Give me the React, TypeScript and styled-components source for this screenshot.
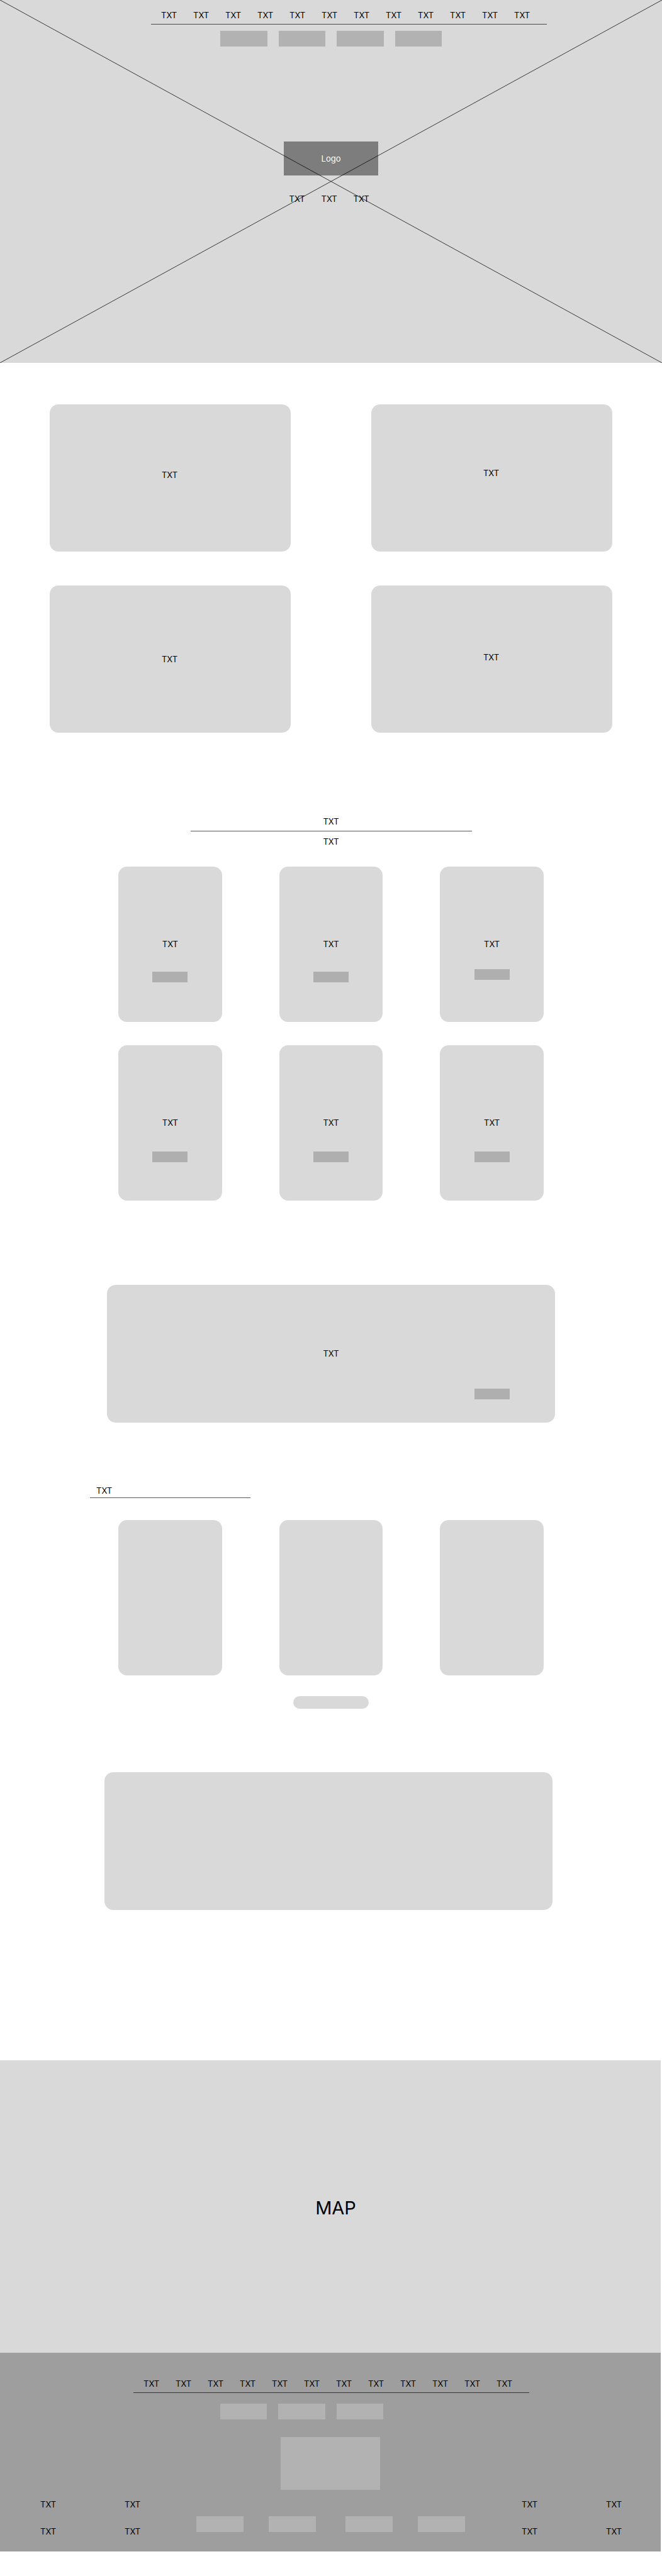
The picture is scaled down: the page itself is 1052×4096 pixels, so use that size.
import React from "react";
import styled, { createGlobalStyle } from "styled-components";

const panel = "#d9d9d9";
const tile = "#b2b2b2";
const hairline = "rgba(0, 0, 0, 0.65)";

const GlobalStyle = createGlobalStyle`
  *, *::before, *::after { box-sizing: border-box; }
  body {
    margin: 0;
    background: #fff;
    color: #000;
    font: 400 13px/16px Inter, "Liberation Sans", sans-serif;
  }
  h1, h2, p, ul { margin: 0; padding: 0; font: inherit; list-style: none; }
  button { border: 0; padding: 0; font: inherit; cursor: pointer; }
`;

const Page = styled.div`
  padding-bottom: 39px;
`;

const Hero = styled.header`
  position: relative;
  display: flex;
  flex-direction: column;
  min-height: 577px;
  padding-top: 16px;
  background: ${panel};
`;

const Cross = styled.svg`
  position: absolute;
  inset: 0;
  width: 100%;
  height: 100%;
  pointer-events: none;
`;

const Nav = styled.nav<{ $indent: number }>`
  width: 629px;
  margin-left: ${(p) => p.$indent}px;
  padding: 0 0 6px 16px;
  border-bottom: 1px solid ${hairline};
`;

const LinkRow = styled.ul`
  display: flex;
  gap: 26px;
`;

const LinkItem = styled.li`
  width: 25px;
`;

const TextLink = styled.a`
  color: inherit;
  text-decoration: none;
`;

const Tiles = styled.div<{ $count: number; $width: number; $top: number }>`
  display: grid;
  grid-template-columns: repeat(${(p) => p.$count}, 1fr);
  gap: 18px;
  width: ${(p) => p.$width}px;
  margin: ${(p) => p.$top}px 0 0 350px;
`;

const Tile = styled.button`
  min-width: 0;
  height: 25px;
  background: ${tile};
`;

const Logo = styled.h1`
  display: grid;
  place-items: center;
  align-self: center;
  width: 150px;
  height: 54px;
  margin-top: 151px;
  background: #7d7d7d;
  color: #fff;
`;

const HeroLinks = styled.nav`
  align-self: center;
  margin-top: 29px;
  padding-right: 6px;
`;

const Features = styled.section`
  display: grid;
  grid-template-columns: 1fr 1fr;
  gap: 54px 128px;
  padding: 66px 79px 0;
`;

const FeatureCard = styled.article<{ $lift: number }>`
  display: grid;
  place-items: center;
  height: 234px;
  padding: 0 2px ${(p) => p.$lift}px 0;
  border-radius: 14px;
  background: ${panel};
`;

const Heading = styled.div`
  width: 447px;
  margin: 133px auto 0;
  text-align: center;
`;

const HeadingTitle = styled.h2`
  padding-bottom: 7px;
  border-bottom: 1px solid ${hairline};
`;

const HeadingText = styled.p`
  padding-top: 8px;
`;

const CardGrid = styled.section<{ $top: number }>`
  display: grid;
  grid-template-columns: repeat(3, 1fr);
  gap: 37px 91px;
  margin: ${(p) => p.$top}px 188px 0;
`;

const Card = styled.article<{ $gap?: number }>`
  display: flex;
  flex-direction: column;
  align-items: center;
  gap: ${(p) => p.$gap ?? 0}px;
  height: 247px;
  padding-top: 115px;
  border-radius: 14px;
  background: ${panel};
`;

const Action = styled.button`
  width: 56px;
  height: 17px;
  background: #afafaf;
`;

const Banner = styled.section<{ $top: number; $left: number; $right: number }>`
  display: flex;
  flex-direction: column;
  align-items: center;
  height: 219px;
  margin: ${(p) => p.$top}px ${(p) => p.$right}px 0 ${(p) => p.$left}px;
  padding: 101px 72px 0;
  border-radius: 14px;
  background: ${panel};

  ${Action} {
    align-self: flex-end;
    margin-top: 48px;
  }
`;

const SideHeading = styled.h2`
  width: 255px;
  margin: 100px 0 0 143px;
  padding: 0 0 3px 10px;
  border-bottom: 1px solid ${hairline};
`;

const Pill = styled.button`
  display: block;
  width: 120px;
  height: 20px;
  margin: 33px auto 0;
  border-radius: 10px;
  background: ${panel};
`;

const MapArea = styled.section`
  display: grid;
  place-items: center;
  height: 465px;
  margin: 239px 2px 0 0;
  padding: 4px 0 0 17px;
  background: ${panel};
  font-size: 29px;
  line-height: 36px;
`;

const Footer = styled.footer`
  margin-right: 2px;
  padding: 41px 0 24px;
  background: #9e9e9e;
`;

const FooterMark = styled.div`
  width: 158px;
  height: 84px;
  margin: 28px auto 0;
  background: ${tile};
`;

const FooterBottom = styled.div`
  display: flex;
  align-items: flex-start;
  justify-content: space-between;
  padding: 15px 62px 0 64px;
`;

const FooterLinks = styled.ul`
  display: grid;
  grid-template-columns: 25px 25px;
  gap: 27px 109px;
`;

const FooterTiles = styled.div`
  display: flex;
  gap: 47px;
  padding: 27px 2px 0 0;
`;

const TilePair = styled.div`
  display: grid;
  grid-template-columns: 75px 75px;
  gap: 40px;
`;

const range = (n: number) => Array.from({ length: n }, (_, i) => i);

const Links = ({ count }: { count: number }) => (
  <>
    {range(count).map((i) => (
      <LinkItem key={i}>
        <TextLink href="#">TXT</TextLink>
      </LinkItem>
    ))}
  </>
);

const TileButtons = ({ count }: { count: number }) => (
  <>
    {range(count).map((i) => (
      <Tile key={i} type="button" aria-label={`Option ${i + 1}`} />
    ))}
  </>
);

const featureLifts = [10, 16, 0, 6];
const cardGaps = [36, 36, 32, 38, 38, 38];

export default function App() {
  return (
    <Page>
      <GlobalStyle />
      <Hero>
        <Nav $indent={240} aria-label="Main">
          <LinkRow>
            <Links count={12} />
          </LinkRow>
        </Nav>
        <Tiles $count={4} $width={352} $top={10}>
          <TileButtons count={4} />
        </Tiles>
        <Logo>Logo</Logo>
        <HeroLinks aria-label="Quick links">
          <LinkRow>
            <Links count={3} />
          </LinkRow>
        </HeroLinks>
        <Cross viewBox="0 0 100 100" preserveAspectRatio="none" aria-hidden="true">
          <path
            d="M0 0 100 100M0 100 100 0"
            fill="none"
            stroke="#000"
            strokeOpacity="0.75"
            vectorEffect="non-scaling-stroke"
          />
        </Cross>
      </Hero>

      <main>
        <Features>
          {featureLifts.map((lift, i) => (
            <FeatureCard key={i} $lift={lift}>
              <p>TXT</p>
            </FeatureCard>
          ))}
        </Features>

        <Heading>
          <HeadingTitle>TXT</HeadingTitle>
          <HeadingText>TXT</HeadingText>
        </Heading>
        <CardGrid $top={32}>
          {cardGaps.map((gap, i) => (
            <Card key={i} $gap={gap}>
              <p>TXT</p>
              <Action type="button" aria-label="Open" />
            </Card>
          ))}
        </CardGrid>

        <Banner $top={134} $left={170} $right={170}>
          <p>TXT</p>
          <Action type="button" aria-label="Open" />
        </Banner>

        <SideHeading>TXT</SideHeading>
        <CardGrid $top={35}>
          {range(3).map((i) => (
            <Card key={i} />
          ))}
        </CardGrid>
        <Pill type="button" aria-label="More" />

        <Banner $top={101} $left={166} $right={174} />

        <MapArea>
          <p>MAP</p>
        </MapArea>
      </main>

      <Footer>
        <Nav $indent={212} aria-label="Footer">
          <LinkRow>
            <Links count={12} />
          </LinkRow>
        </Nav>
        <Tiles $count={3} $width={259} $top={17}>
          <TileButtons count={3} />
        </Tiles>
        <FooterMark />
        <FooterBottom>
          <FooterLinks>
            <Links count={4} />
          </FooterLinks>
          <FooterTiles>
            <TilePair>
              <TileButtons count={2} />
            </TilePair>
            <TilePair>
              <TileButtons count={2} />
            </TilePair>
          </FooterTiles>
          <FooterLinks>
            <Links count={4} />
          </FooterLinks>
        </FooterBottom>
      </Footer>
    </Page>
  );
}
